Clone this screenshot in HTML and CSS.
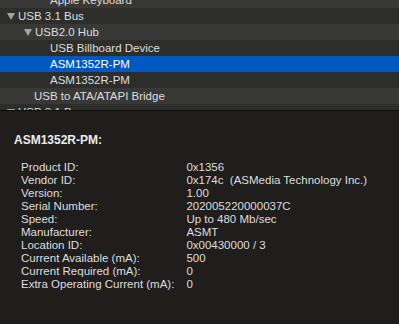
FILE: index.html
```html
<!DOCTYPE html>
<html lang="en">
<head>
    <meta charset="UTF-8">
    <title>System Information - USB</title>
    <link rel="stylesheet" href="styles.css">
</head>
<body>
    <div class="tree">
        <ul class="tree-list">
            <li class="row light level-3">Apple Keyboard</li>
            <li class="row dark level-1"><span class="toggle"></span>USB 3.1 Bus</li>
            <li class="row light level-2"><span class="toggle"></span>USB2.0 Hub</li>
            <li class="row dark level-3">USB Billboard Device</li>
            <li class="row selected level-3">ASM1352R-PM</li>
            <li class="row dark level-3">ASM1352R-PM</li>
            <li class="row light level-2 leaf">USB to ATA/ATAPI Bridge</li>
            <li class="row dark level-1"><span class="toggle"></span>USB 3.1 Bus</li>
        </ul>
    </div>

    <div class="details">
        <h2>ASM1352R-PM:</h2>
        <dl class="props">
            <dt>Product ID:</dt><dd>0x1356</dd>
            <dt>Vendor ID:</dt><dd>0x174c&nbsp; (ASMedia Technology Inc.)</dd>
            <dt>Version:</dt><dd>1.00</dd>
            <dt>Serial Number:</dt><dd>202005220000037C</dd>
            <dt>Speed:</dt><dd>Up to 480 Mb/sec</dd>
            <dt>Manufacturer:</dt><dd>ASMT</dd>
            <dt>Location ID:</dt><dd>0x00430000 / 3</dd>
            <dt>Current Available (mA):</dt><dd>500</dd>
            <dt>Current Required (mA):</dt><dd>0</dd>
            <dt>Extra Operating Current (mA):</dt><dd>0</dd>
        </dl>
    </div>
</body>
</html>
```

FILE: styles.css
```css
body {
    margin: 0;
    width: 399px;
    height: 324px;
    overflow: hidden;
    background: #1f1e1c;
    font-family: "Liberation Sans", Arial, sans-serif;
    font-size: 11.5px;
    color: #dedede;
}

.tree {
    height: 110px;
    overflow: hidden;
    background: #2d2e2c;
    border-bottom: 1px solid #0c0c0b;
}

.tree-list {
    list-style: none;
    margin: -8px 0 0 0;
    padding: 0;
}

.row {
    height: 16px;
    display: flex;
    align-items: center;
    white-space: nowrap;
}

.row.light {
    background: #383937;
}

.row.dark {
    background: #2d2e2c;
}

.row.selected {
    background: #0059c1;
    color: #ffffff;
}

.level-1 {
    padding-left: 7px;
}

.level-2 {
    padding-left: 24px;
}

.level-2.leaf {
    padding-left: 34px;
}

.level-3 {
    padding-left: 50px;
}

.toggle {
    width: 0;
    height: 0;
    border-left: 4px solid transparent;
    border-right: 4px solid transparent;
    border-top: 7px solid #a3a3a1;
    margin-right: 3px;
}

.details {
    padding: 22px 14px 0;
}

.details h2 {
    margin: 0 0 14px;
    font-size: 12px;
    font-weight: bold;
    color: #ececec;
}

.props {
    display: grid;
    grid-template-columns: auto 1fr;
    column-gap: 12px;
    margin: 0;
    padding-left: 7px;
    line-height: 13px;
}

.props dt,
.props dd {
    margin: 0;
}
```
